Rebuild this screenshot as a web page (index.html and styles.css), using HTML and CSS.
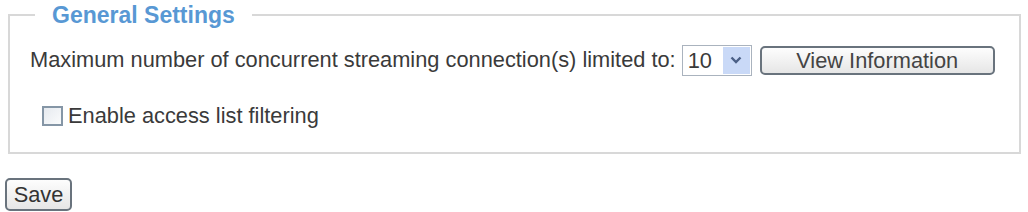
FILE: index.html
```html
<!DOCTYPE html>
<html lang="en">
<head>
<meta charset="UTF-8" />
<title>Streaming Settings</title>
<link rel="stylesheet" href="styles.css">
</head>
<body>

<fieldset class="settings">
  <legend>General Settings</legend>
  <div class="row">
    <span class="label">Maximum number of concurrent streaming connection(s) limited to:</span>
    <div class="dropdown">
      <span class="value">10</span>
      <span class="arrow">
        <svg viewBox="0 0 12 8"><path d="M1.5 1.5 L6 6 L10.5 1.5" /></svg>
      </span>
    </div>
    <button class="btn btn-wide" type="button">View Information</button>
  </div>
  <label class="row check-row">
    <input type="checkbox" />
    <span>Enable access list filtering</span>
  </label>
</fieldset>

<button class="btn btn-save" type="button">Save</button>

</body>
</html>
```

FILE: styles.css
```css
body {
  margin: 0;
  padding: 2px 7px 0 5px;
  background: #fff;
  font-family: "Liberation Sans", Arial, sans-serif;
  font-size: 21.8px;
  color: #3a3a3a;
}
.settings {
  margin: 0 0 24px 3px;
  padding: 16px 20px 24px;
  border: 2px solid #d8d8d8;
  min-width: 0;
}
.settings legend {
  margin-left: 5px;
  padding: 0 17px;
  font-size: 23px;
  line-height: 26px;
  font-weight: bold;
  color: #5898d4;
}
.row {
  display: flex;
  align-items: center;
  height: 32px;
}
.label {
  margin-right: 6px;
}
.dropdown {
  display: flex;
  align-items: stretch;
  width: 70px;
  height: 31px;
  border: 1px solid #aab3be;
  box-sizing: border-box;
  margin-right: 8px;
  background: #fff;
}
.dropdown .value {
  flex: 1;
  padding-left: 5px;
  line-height: 29px;
}
.dropdown .arrow {
  width: 27px;
  margin: 1px;
  background: #c9d9f7;
  display: flex;
  align-items: center;
  justify-content: center;
}
.dropdown svg {
  width: 12px;
  height: 8px;
  fill: none;
  stroke: #4a5f86;
  stroke-width: 2.4;
}
.btn {
  font-family: inherit;
  font-size: 21.8px;
  color: #444;
  border: 2px solid #69737d;
  border-radius: 5px;
  background: linear-gradient(#fdfdfd, #e6e6e6);
  padding: 0;
  cursor: pointer;
}
.btn-wide {
  width: 235px;
  height: 29px;
  line-height: 25px;
}
.btn-save {
  width: 67px;
  height: 33px;
  color: #333;
}
.check-row {
  margin-top: 28px;
  height: 24px;
  cursor: pointer;
}
.check-row input {
  appearance: none;
  width: 21px;
  height: 20px;
  margin: 0 5px 0 12px;
  border: 2px solid #8596a6;
  background: linear-gradient(135deg, #e6eaef, #fafbfc);
  box-sizing: border-box;
}
```
